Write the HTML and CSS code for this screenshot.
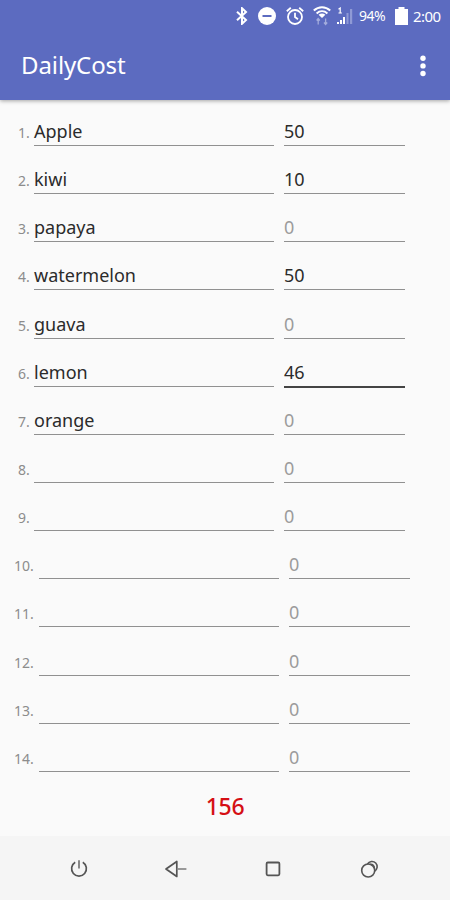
FILE: index.html
```html
<!DOCTYPE html>
<html lang="en">
<head>
    <meta charset="UTF-8">
    <meta name="viewport" content="width=device-width, initial-scale=1.0">
    <title>DailyCost</title>
    <link rel="stylesheet" href="styles.css">
</head>
<body>
    <header class="header">
        <div class="status-bar">
            <svg class="icon-bluetooth" width="12" height="18" viewBox="0 0 12 18" fill="none" stroke="#fff" stroke-width="2">
                <path d="M1 4.8l9 8.2-4 3.8V1.2l4 3.8-9 8.2"/>
            </svg>
            <svg class="icon-dnd" width="18" height="18" viewBox="0 0 18 18">
                <circle cx="9" cy="9" r="9" fill="#fff"/>
                <path d="M4.5 9h9" stroke="#5c6bc0" stroke-width="2"/>
            </svg>
            <svg class="icon-alarm" width="18" height="18" viewBox="0 0 18 18" fill="none" stroke="#fff" stroke-width="1.8">
                <circle cx="9" cy="10" r="7"/>
                <path d="M9 5.8V10l3 2.2M.8 4.2l4-3.400M17.2 4.2l-4-3.400"/>
            </svg>
            <svg class="icon-wifi" width="18" height="20" viewBox="0 0 18 20">
                <g fill="none" stroke="#fff" stroke-width="2">
                    <path d="M.8 4.6c4.8-4.4 11.600-4.4 16.400 0M3.600 7.400c3.200-2.900 7.600-2.900 10.800 0"/>
                </g>
                <path d="M5.600 8.800c2-1.600 4.800-1.600 6.800 0L9 12z" fill="#fff"/>
                <path d="M5.200 12.500v6M12.600 12.500v6M3.600 14.500l1.600-2 1.600 2M11 16.500l1.600 2 1.600-2" fill="none" stroke="#a3acdc" stroke-width="1.300"/>
            </svg>
            <svg class="icon-signal" width="16" height="18" viewBox="0 0 16 18">
                <path d="M1.500 2.200L3.200 1v5M1.500 6h3.400" fill="none" stroke="#fff" stroke-width="1.200"/>
                <path d="M0 15h2v2H0zM3 13h2v4H3zM6 10h2v7H6z" fill="#fff"/>
                <path d="M9.500 6h2v11h-2zM13 2h2.200v15H13z" fill="#8f9ad5"/>
            </svg>
            <span class="battery-level">94%</span>
            <svg class="icon-battery" width="13" height="18" viewBox="0 0 13 18" fill="#fff">
                <path d="M0 2h3.500V0h6v2H13v16H0z"/>
            </svg>
            <span class="clock">2:00</span>
        </div>
        <div class="toolbar">
            <h1>DailyCost</h1>
            <svg class="icon-menu" width="6" height="22" viewBox="0 0 6 22" fill="#fff">
                <circle cx="3" cy="3.300" r="2.700"/>
                <circle cx="3" cy="10.900" r="2.700"/>
                <circle cx="3" cy="18.500" r="2.700"/>
            </svg>
        </div>
    </header>

    <main class="costs">
        <div class="row"><span class="num">1.</span><span class="field name">Apple</span><span class="field cost">50</span></div>
        <div class="row"><span class="num">2.</span><span class="field name">kiwi</span><span class="field cost">10</span></div>
        <div class="row"><span class="num">3.</span><span class="field name">papaya</span><span class="field cost hint">0</span></div>
        <div class="row"><span class="num">4.</span><span class="field name">watermelon</span><span class="field cost">50</span></div>
        <div class="row"><span class="num">5.</span><span class="field name">guava</span><span class="field cost hint">0</span></div>
        <div class="row"><span class="num">6.</span><span class="field name">lemon</span><span class="field cost focused">46</span></div>
        <div class="row"><span class="num">7.</span><span class="field name">orange</span><span class="field cost hint">0</span></div>
        <div class="row"><span class="num">8.</span><span class="field name"></span><span class="field cost hint">0</span></div>
        <div class="row"><span class="num">9.</span><span class="field name"></span><span class="field cost hint">0</span></div>
        <div class="row wide"><span class="num">10.</span><span class="field name"></span><span class="field cost hint">0</span></div>
        <div class="row wide"><span class="num">11.</span><span class="field name"></span><span class="field cost hint">0</span></div>
        <div class="row wide"><span class="num">12.</span><span class="field name"></span><span class="field cost hint">0</span></div>
        <div class="row wide"><span class="num">13.</span><span class="field name"></span><span class="field cost hint">0</span></div>
        <div class="row wide"><span class="num">14.</span><span class="field name"></span><span class="field cost hint">0</span></div>
    </main>

    <div class="total">156</div>

    <nav class="nav-bar">
        <svg width="24" height="24" viewBox="0 0 24 24" fill="none" stroke="#555" stroke-width="1.700">
            <path d="M8.200 5.300a7.400 7.400 0 1 0 7.600 0"/>
            <path d="M12 3.300v8.200" stroke="#888" stroke-width="2"/>
        </svg>
        <svg width="24" height="24" viewBox="0 0 24 24" fill="none" stroke="#555" stroke-width="1.700">
            <path d="M12.800 4.500v15L2 12z" stroke-linejoin="round"/>
            <path d="M12.800 12h9.600" stroke="#888"/>
        </svg>
        <svg width="24" height="24" viewBox="0 0 24 24" fill="none" stroke="#555" stroke-width="1.800">
            <rect x="5.600" y="5.500" width="12.800" height="12.800" rx="1.200"/>
        </svg>
        <svg width="24" height="24" viewBox="0 0 24 24" fill="none" stroke="#555" stroke-width="1.600">
            <circle cx="10.200" cy="13.500" r="6.500"/>
            <path d="M9.500 7a5.200 5.200 0 1 1 7 7.200M12.200 7.300a3.600 3.600 0 0 1 4 4.200"/>
        </svg>
    </nav>
</body>
</html>
```

FILE: styles.css
```css
:root {
    --primary-color: #5c6bc0;
    --background-color: #fafafa;
    --nav-color: #f5f5f5;
    --text-color: #2b2b2b;
    --hint-color: #9c9c9c;
    --line-color: #909090;
    --total-color: #d50f14;
}

* {
    box-sizing: border-box;
}

body {
    display: flex;
    flex-direction: column;
    height: 900px;
    margin: 0;
    font-family: "Noto Sans", "Open Sans", sans-serif;
    background-color: var(--background-color);
    color: var(--text-color);
}

.header {
    height: 100px;
    color: white;
    background-color: var(--primary-color);
    box-shadow: 0 1px 4px rgba(0, 0, 0, 0.35);
}

.status-bar {
    display: flex;
    align-items: center;
    height: 31px;
    padding-left: 236px;
    font-size: 14px;
    line-height: 30px;
}

.icon-dnd {
    margin-left: 10px;
}

.icon-alarm {
    margin-left: 10px;
}

.icon-wifi {
    margin-left: 9px;
}

.icon-signal {
    margin-left: 6px;
}

.battery-level {
    width: 27px;
    margin-left: 6px;
    letter-spacing: -0.5px;
}

.icon-battery {
    margin-left: 9px;
}

.clock {
    margin-left: 5px;
    font-size: 15px;
    letter-spacing: -0.6px;
}

.toolbar {
    display: flex;
    align-items: center;
    justify-content: space-between;
    height: 69px;
    padding: 0 24px 0 21px;
}

h1 {
    margin: -2px 0 0;
    font-size: 24px;
    font-weight: 400;
    letter-spacing: -0.1px;
}

.costs {
    padding-top: 5px;
}

.row {
    display: flex;
    height: 48.15px;
    padding-left: 18px;
}

.row.wide {
    padding-left: 14px;
}

.num {
    width: 16px;
    padding-top: 18px;
    font-size: 14px;
    line-height: 20px;
    color: #8c8c8c;
}

.wide .num {
    width: 25px;
}

.field {
    height: 41px;
    padding-top: 13px;
    font-size: 18px;
    line-height: 26px;
    border-bottom: 1px solid var(--line-color);
}

.name {
    width: 240px;
}

.cost {
    width: 121px;
    margin-left: 10px;
}

.hint {
    color: var(--hint-color);
}

.focused {
    height: 42px;
    border-bottom: 2px solid #444;
}

.total {
    flex: 1;
    padding-top: 8px;
    text-align: center;
    font-size: 23px;
    line-height: 38px;
    font-weight: 500;
    letter-spacing: -0.3px;
    color: var(--total-color);
}

.nav-bar {
    display: flex;
    align-items: center;
    justify-content: space-between;
    height: 64px;
    padding: 2px 68px 0 67px;
    background-color: var(--nav-color);
}
```
